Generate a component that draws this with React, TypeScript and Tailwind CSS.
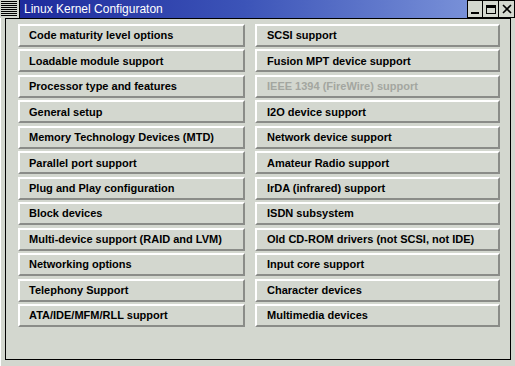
import React from "react";

const left = [
  "Code maturity level options",
  "Loadable module support",
  "Processor type and features",
  "General setup",
  "Memory Technology Devices (MTD)",
  "Parallel port support",
  "Plug and Play configuration",
  "Block devices",
  "Multi-device support (RAID and LVM)",
  "Networking options",
  "Telephony Support",
  "ATA/IDE/MFM/RLL support",
];

const right: { t: string; d?: boolean }[] = [
  { t: "SCSI support" },
  { t: "Fusion MPT device support" },
  { t: "IEEE 1394 (FireWire) support", d: true },
  { t: "I2O device support" },
  { t: "Network device support" },
  { t: "Amateur Radio support" },
  { t: "IrDA (infrared) support" },
  { t: "ISDN subsystem" },
  { t: "Old CD-ROM drivers (not SCSI, not IDE)" },
  { t: "Input core support" },
  { t: "Character devices" },
  { t: "Multimedia devices" },
];

function Btn({ t, d, pl }: { t: string; d?: boolean; pl: string }) {
  return (
    <div
      className={`h-[23px] flex items-center border-2 border-t-white border-l-white border-b-[#8a8c88] border-r-[#8a8c88] bg-[#d3d7cf] ${pl} text-[11px] font-bold whitespace-nowrap ${
        d ? "text-[#a3a6a0]" : "text-black"
      }`}
    >
      {t}
    </div>
  );
}

export default function App() {
  return (
    <div
      className="w-[515px] h-[366px] bg-[#d3d7cf] flex flex-col overflow-hidden"
      style={{ fontFamily: '"Liberation Sans", Arial, sans-serif' }}
    >
      <div className="h-[18px] flex">
        <div className="w-[20px] h-[18px] bg-[#d3d7cf] flex flex-col justify-start pt-[1px] pl-[1px] pr-[2px] gap-[1px] border-r border-black">
          {Array.from({ length: 8 }).map((_, i) => (
            <div key={i} className="h-[1px] bg-black w-full" />
          ))}
        </div>
        <div className="flex-1 h-[18px] bg-[linear-gradient(to_right,#1e2a9c,#3c54b8_50%,#7890d8)] flex items-center pl-[4px] text-white text-[12px] leading-none">
          Linux Kernel Configuraton
        </div>
        <div className="flex">
          <div className="w-[16px] h-[18px] border border-black bg-[#d3d7cf] flex items-end justify-center pb-[3px]">
            <div className="w-[8px] h-[2px] bg-black" />
          </div>
          <div className="w-[16px] h-[18px] border border-l-0 border-black bg-[#d3d7cf] flex items-center justify-center">
            <div className="w-[10px] h-[9px] border border-black border-t-[3px]" />
          </div>
          <div className="w-[16px] h-[18px] border border-l-0 border-black bg-[#d3d7cf] flex items-center justify-center">
            <svg width="10" height="10" viewBox="0 0 10 10">
              <path d="M1 1 L9 9 M9 1 L1 9" stroke="black" strokeWidth="1.6" />
            </svg>
          </div>
        </div>
      </div>
      <div className="flex-1 pl-[4px] pr-[4px] pb-[6px] border-l border-l-white">
        <div className="h-full border border-black flex pt-[5px] pl-[12px] gap-[10px]">
          <div className="w-[227px] h-[303px] flex flex-col justify-between">
            {left.map((t) => (
              <Btn key={t} t={t} pl="pl-[9px]" />
            ))}
          </div>
          <div className="w-[245px] h-[303px] flex flex-col justify-between">
            {right.map((r) => (
              <Btn key={r.t} t={r.t} d={r.d} pl="pl-[10px]" />
            ))}
          </div>
        </div>
      </div>
    </div>
  );
}
